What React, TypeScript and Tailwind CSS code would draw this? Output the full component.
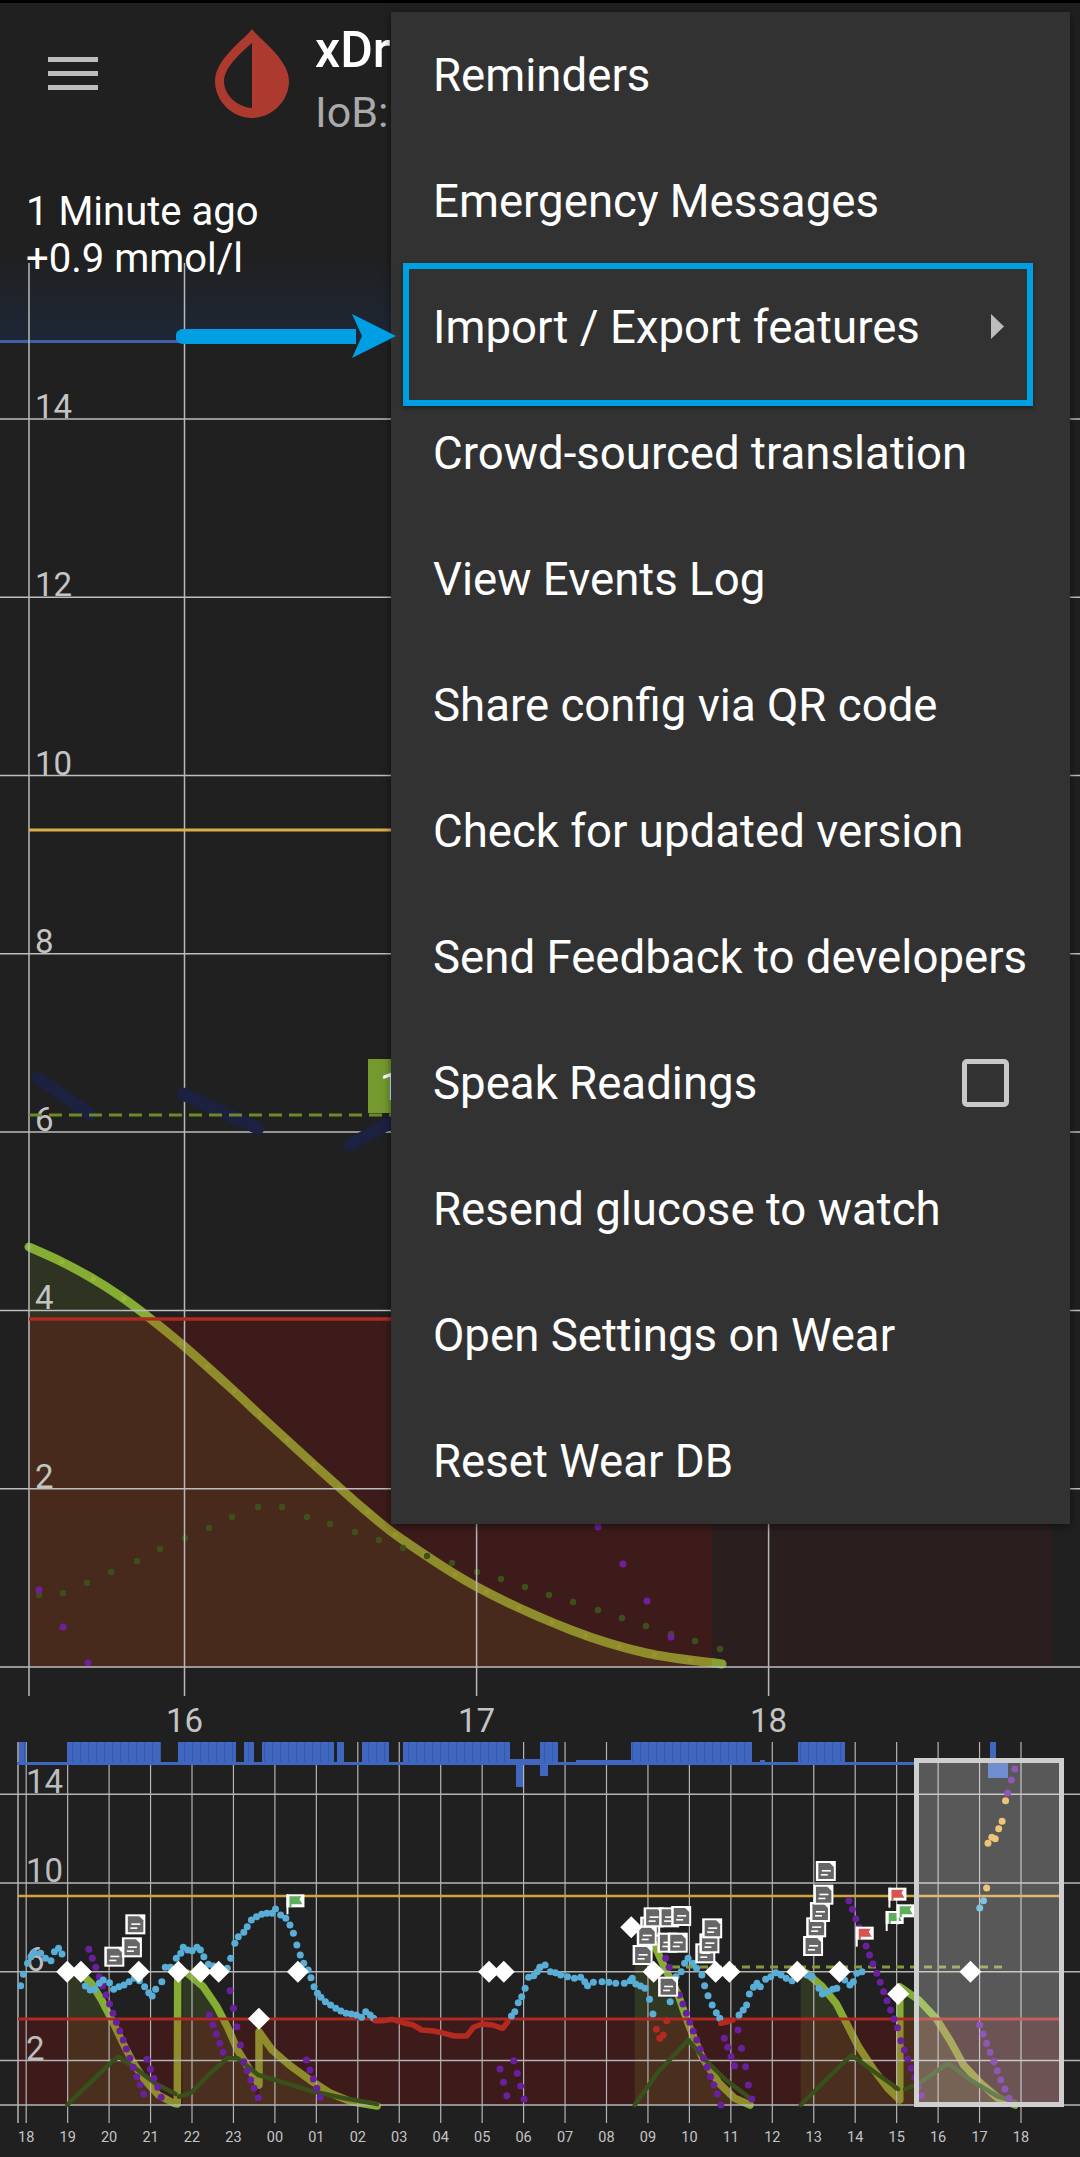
type Pt = [number, number]

const MENU_ITEMS = [
  'Reminders',
  'Emergency Messages',
  'Import / Export features',
  'Crowd-sourced translation',
  'View Events Log',
  'Share config via QR code',
  'Check for updated version',
  'Send Feedback to developers',
  'Speak Readings',
  'Resend glucose to watch',
  'Open Settings on Wear',
  'Reset Wear DB',
]

// preview data was measured on two crops, so convert to page coordinates here
const L = (pts: Pt[]): Pt[] => pts.map(([x, y]) => [x / 2.904, 1730 + y / 3])
const R = (pts: Pt[]): Pt[] => pts.map(([x, y]) => [540 + x / 2.904, 1730 + y / 3])
const line = (pts: Pt[]) => pts.map(([x, y]) => `${x.toFixed(1)},${y.toFixed(1)}`).join(' ')

const smooth = (pts: Pt[]) => {
  let d = `M${pts[0][0]} ${pts[0][1]}`
  for (let i = 0; i < pts.length - 1; i++) {
    const p0 = pts[i - 1] ?? pts[i]
    const p1 = pts[i]
    const p2 = pts[i + 1]
    const p3 = pts[i + 2] ?? p2
    const c1x = p1[0] + (p2[0] - p0[0]) / 6
    const c1y = p1[1] + (p2[1] - p0[1]) / 6
    const c2x = p2[0] - (p3[0] - p1[0]) / 6
    const c2y = p2[1] - (p3[1] - p1[1]) / 6
    d += ` C${c1x.toFixed(1)} ${c1y.toFixed(1)} ${c2x.toFixed(1)} ${c2y.toFixed(1)} ${p2[0].toFixed(1)} ${p2[1].toFixed(1)}`
  }
  return d
}

const MAIN_CURVE: Pt[] = [
  [29, 1247], [60, 1261], [90, 1277], [120, 1296], [147, 1316], [185, 1347], [233, 1390], [264, 1419], [300, 1452],
  [330, 1479], [365, 1510], [403, 1540], [477, 1587], [571, 1630], [646, 1653], [722, 1664],
]
const MAIN_CARB_DOTS: Pt[] = [
  [39, 1595], [63, 1593], [87, 1583], [111, 1572], [137, 1561], [160, 1549], [185, 1538], [209, 1528],
  [232, 1517], [258, 1507], [282, 1507], [307, 1517], [330, 1524], [355, 1532], [379, 1540], [403, 1548],
  [427, 1556], [452, 1563], [477, 1572], [501, 1579], [525, 1587], [549, 1595], [573, 1602], [598, 1610],
  [622, 1618], [646, 1626], [671, 1634], [695, 1641], [720, 1649],
]
const MAIN_PURPLE: Pt[] = [[39, 1590], [63, 1627], [88, 1663], [598, 1527], [623, 1564], [647, 1601], [671, 1637]]

const BLUE_DOTS: Pt[] = [
  ...L([
    [60, 767], [68, 733], [80, 700], [90, 680], [100, 668], [118, 670], [132, 685], [148, 692], [158, 665], [170, 655], [180, 672],
    [248, 768], [262, 780], [275, 778], [288, 760], [300, 750], [318, 758], [330, 778], [345, 770], [360, 765], [375, 755], [390, 745],
    [405, 752], [420, 770], [432, 788], [442, 798], [452, 778], [470, 755], [480, 712], [495, 712], [512, 685], [525, 670], [532, 652],
    [545, 660], [558, 662], [572, 652], [582, 660], [592, 680], [605, 703], [620, 708], [660, 715], [670, 685], [682, 640], [692, 620],
    [708, 607], [718, 590], [730, 570], [745, 560], [760, 553], [775, 550], [790, 550], [800, 537], [815, 555], [830, 565], [842, 585],
    [852, 610], [862, 645], [872, 675], [882, 700], [895, 720], [903, 743], [912, 770], [922, 790], [932, 802], [945, 815], [960, 825],
    [975, 835], [990, 843], [1005, 850], [1020, 852], [1035, 855], [1050, 862], [1062, 845], [1075, 855], [1085, 865],
    [1485, 858], [1495, 845], [1505, 818], [1515, 800], [1525, 775], [1535, 742], [1550, 737], [1560, 725], [1568, 712],
  ]),
  ...R([
    [0, 712], [15, 705], [30, 725], [45, 728], [60, 735], [80, 740], [100, 745], [118, 742], [130, 755], [138, 767], [155, 757], [180, 755],
    [200, 757], [220, 760], [245, 760], [262, 752], [268, 745], [278, 762], [292, 768], [305, 775], [318, 808], [328, 852], [378, 815],
    [395, 740], [410, 725], [420, 700], [430, 685], [445, 700], [455, 715], [470, 735], [478, 767], [488, 797], [500, 825], [512, 848],
    [522, 865], [578, 855], [590, 840], [600, 825], [608, 792], [620, 772], [630, 760], [640, 770], [655, 748], [670, 740], [685, 728],
    [700, 735], [715, 745], [732, 752], [775, 735], [790, 740], [810, 775], [820, 792], [835, 785], [850, 778], [862, 775], [885, 750],
    [900, 765], [910, 755], [920, 730], [935, 725], [1277, 534], [1288, 512],
  ]),
]
const YELLOW_DOTS = R([[1297, 474], [1301, 340], [1312, 322], [1322, 326], [1332, 296], [1342, 274], [1352, 212]])
const PURPLE_DOTS: Pt[] = [
  ...L([
    [258, 658], [268, 685], [278, 712], [288, 740], [298, 768], [308, 795], [318, 822], [328, 850], [338, 877], [348, 903], [358, 930],
    [367, 957], [377, 985], [387, 1012], [397, 1040], [407, 1065], [417, 1092], [427, 988], [437, 1018], [447, 1045], [458, 1072], [468, 1102],
    [608, 855], [618, 885], [628, 912], [638, 940], [648, 967], [668, 782], [678, 835], [688, 890], [698, 945], [708, 995], [718, 1022],
    [728, 1050], [738, 1075], [750, 1103], [890, 990], [900, 1020], [910, 1047], [920, 1075], [930, 1102],
    [1452, 1017], [1462, 1057], [1472, 1097], [1492, 992], [1502, 1030], [1512, 1068], [1522, 1108],
  ]),
  ...R([
    [365, 685], [375, 712], [405, 795], [415, 822], [425, 850], [435, 877], [445, 903], [455, 930], [465, 957], [475, 985], [485, 1012],
    [495, 1040], [505, 1065], [515, 1092], [525, 1125], [535, 925], [545, 952], [555, 980], [565, 1007], [575, 900], [585, 955], [597, 1010],
    [605, 1065], [615, 1107], [897, 512], [907, 538], [917, 567], [927, 593], [947, 648], [957, 675], [967, 702], [978, 730], [988, 757],
    [998, 785], [1008, 812], [1018, 840], [1028, 867], [1038, 893], [1048, 932], [1058, 960], [1068, 987], [1078, 1015], [1088, 1042],
    [1098, 1070], [1108, 1097], [1277, 885], [1287, 912], [1297, 940], [1307, 967], [1318, 995], [1328, 1022], [1338, 1050], [1350, 1077],
    [1362, 1105], [1358, 189], [1369, 150], [1379, 117],
  ]),
]

const GREEN_CURVES: Pt[][] = [
  L([[240, 735], [265, 760], [295, 810], [325, 870], [355, 935], [385, 995], [420, 1050], [460, 1095], [505, 1120], [515, 1122], [516, 750]]),
  L([[545, 730], [590, 770], [630, 830], [660, 890], [690, 960], [720, 1010], [752, 1065], [752, 905], [790, 960], [840, 1005], [900, 1050], [960, 1090], [1020, 1115], [1095, 1128]]),
  R([[330, 640], [365, 720], [400, 790], [430, 880], [470, 980], [520, 1060], [565, 1105], [610, 1125]]),
  R([[775, 730], [820, 770], [860, 820], [890, 880], [925, 950], [970, 1020], [1010, 1075], [1045, 1110], [1045, 800], [1045, 770], [1100, 810], [1150, 865], [1190, 930], [1230, 1005], [1280, 1060], [1330, 1105], [1380, 1125]]),
]
const GREEN_FILLS: Pt[][] = [
  L([[197, 1125], [197, 730], [240, 735], [295, 810], [355, 935], [420, 1050], [505, 1125]]),
  L([[530, 1125], [530, 730], [590, 770], [660, 890], [720, 1010], [752, 1125]]),
  L([[752, 1125], [752, 905], [840, 1005], [960, 1090], [1095, 1125]]),
  R([[275, 1125], [275, 690], [365, 720], [430, 880], [520, 1060], [610, 1125]]),
  R([[757, 1125], [757, 730], [820, 770], [890, 880], [970, 1020], [1045, 1125]]),
  R([[1045, 1125], [1045, 770], [1150, 865], [1230, 1005], [1380, 1125]]),
]
const DARK_CURVES: Pt[][] = [
  L([[195, 1125], [260, 1060], [320, 1000], [345, 980], [400, 1020], [450, 1060], [510, 1092]]),
  L([[520, 1100], [555, 1088], [610, 1030], [660, 985], [690, 985], [750, 1035], [800, 1050], [900, 1082], [1000, 1105], [1095, 1122]]),
  R([[275, 1125], [340, 1030], [430, 930], [480, 990], [540, 1050], [610, 1105]]),
  R([[757, 1125], [830, 1050], [905, 975], [970, 1025], [1040, 1077]]),
  R([[1060, 1078], [1100, 1060], [1185, 1000], [1250, 1050], [1330, 1100], [1380, 1115]]),
]
const RED_LINES: Pt[][] = [
  L([[1090, 872], [1110, 872], [1140, 868], [1170, 878], [1200, 885], [1225, 900], [1260, 903], [1290, 910], [1320, 918], [1355, 918], [1375, 892], [1400, 882], [1430, 885], [1460, 895], [1475, 875]]),
  R([[525, 880], [545, 875], [560, 870]]),
]
const RED_DOTS = R([[338, 898], [358, 915], [348, 925], [368, 872]])
const DIAMONDS: Pt[] = [
  ...L([[195, 725], [235, 725], [403, 725], [518, 725], [583, 725], [635, 725], [865, 725], [752, 866], [1420, 725], [1463, 725]]),
  ...R([[265, 592], [330, 725], [510, 725], [550, 725], [747, 725], [870, 725], [1040, 792], [1250, 725]]),
]
const NOTES: Pt[] = [
  ...L([[332, 680], [383, 652], [393, 583]]),
  ...R([
    [320, 590], [310, 617], [298, 675], [330, 562], [375, 562], [410, 558], [370, 638], [400, 638], [372, 770],
    [480, 670], [492, 640], [500, 595], [793, 648], [802, 592], [813, 546], [823, 494], [830, 423],
  ]),
]
const FLAGS: { p: Pt; color: string }[] = [
  { p: L([[858, 520]])[0], color: '#5fae5c' },
  { p: R([[943, 617]])[0], color: '#d9534f' },
  { p: R([[1038, 500]])[0], color: '#d9534f' },
  { p: R([[1030, 570]])[0], color: '#5fae5c' },
  { p: R([[1062, 550]])[0], color: '#5fae5c' },
]
const BASAL_BARS: [number, number][] = [
  [19, 26], [67, 161], [178, 236], [244, 254], [262, 334], [337, 344], [362, 389], [403, 510], [540, 558], [631, 752], [798, 845],
]
const HOURS = ['18', '19', '20', '21', '22', '23', '00', '01', '02', '03', '04', '05', '06', '07', '08', '09', '10', '11', '12', '13', '14', '15', '16', '17', '18']

const Dots = ({ pts, color, r = 3.2 }: { pts: Pt[]; color: string; r?: number }) => (
  <>
    {pts.map(([x, y], i) => (
      <circle key={i} cx={x} cy={y} r={r} fill={color} />
    ))}
  </>
)

const MainChart = () => (
  <svg className="block w-[1080px] h-[1610px]" viewBox="0 130 1080 1610">
    <defs>
      <linearGradient id="basalGlow" x1="0" y1="0" x2="0" y2="1">
        <stop offset="0" stopColor="#1e2737" stopOpacity="0" />
        <stop offset="1" stopColor="#1e2737" />
      </linearGradient>
    </defs>
    <rect x="0" y="255" width="391" height="87" fill="url(#basalGlow)" />
    <rect x="0" y="340" width="180" height="3" fill="#3f5da8" />

    <path d={`${smooth(MAIN_CURVE)} L722 1667 L29 1667 Z`} fill="#85ad34" fillOpacity="0.14" />
    <path d={smooth(MAIN_CURVE)} fill="none" stroke="#85ad34" strokeWidth="9" strokeLinecap="round" />
    <path d={smooth(MAIN_CURVE)} fill="none" stroke="#a5c040" strokeOpacity="0.55" strokeWidth="5" strokeLinecap="round" strokeDasharray="0 36" />

    <rect x="29" y="1321" width="683" height="346" fill="#b20808" fillOpacity="0.2" />
    <rect x="712" y="1321" width="340" height="346" fill="#b20808" fillOpacity="0.08" />
    <Dots pts={MAIN_CARB_DOTS} color="#3f4f1c" />
    <Dots pts={MAIN_PURPLE} color="#6f1f9e" r={3.5} />

    {[14, 12, 10, 8, 6, 4, 2, 0].map((v) => {
      const y = 1667 - 89.15 * v
      return (
        <g key={v}>
          <line x1="0" x2="1080" y1={y} y2={y} stroke="#bdbdbd" strokeWidth="1.5" />
          {v > 0 && (
            <text x="35" y={y - 1} fontSize="33" fill="#c4c4c4">
              {v}
            </text>
          )}
        </g>
      )
    })}
    {[29, 184.5, 476.6, 768.6].map((x) => (
      <line key={x} x1={x} x2={x} y1="263" y2="1696" stroke="#b8b8b8" strokeWidth="1.5" />
    ))}
    {[
      ['16', 184.5],
      ['17', 476.6],
      ['18', 768.6],
    ].map(([label, x]) => (
      <text key={label} x={x} y="1732" fontSize="33" fill="#c4c4c4" textAnchor="middle">
        {label}
      </text>
    ))}

    <line x1="29" x2="391" y1="830" y2="830" stroke="#d8b04a" strokeWidth="3" />
    <g stroke="#1c2140" strokeWidth="13" strokeLinecap="round">
      <line x1="38" y1="1078" x2="90" y2="1114" />
      <line x1="183" y1="1094" x2="258" y2="1128" />
      <line x1="350" y1="1145" x2="391" y2="1122" />
    </g>
    <rect x="368" y="1059" width="23" height="54" fill="#74992e" />
    <text x="380" y="1100" fontSize="38" fill="#fff">
      1
    </text>
    <line x1="29" x2="391" y1="1115" y2="1115" stroke="#6c8a2a" strokeWidth="3" strokeDasharray="13 7" />
    <line x1="29" x2="1052" y1="1319" y2="1319" stroke="#b0281f" strokeWidth="3.5" />
  </svg>
)

const NoteIcon = ({ p }: { p: Pt }) => (
  <g transform={`translate(${p[0] - 10} ${p[1] - 10})`}>
    <rect width="20" height="20" fill="#fff" />
    <path d="M2.5 2 H14 L18 6 V18 H2.5 Z" fill="#666" />
    <rect x="6" y="9" width="9" height="1.6" fill="#fff" />
    <rect x="5" y="13" width="7" height="1.6" fill="#fff" />
  </g>
)

const FlagIcon = ({ p, color }: { p: Pt; color: string }) => (
  <g transform={`translate(${p[0] - 9} ${p[1] - 9})`}>
    <rect x="0" y="0" width="18" height="13" fill="#fff" />
    <rect x="0" y="0" width="2" height="20" fill="#fff" />
    <path d="M3 2 H15 L13 5 L16 10 H5 V13 H3 Z" fill={color} />
  </g>
)

const PreviewChart = () => {
  const ys = [14, 10, 6, 2, 0]
  return (
    <svg className="block w-[1080px] h-[417px]" viewBox="0 1740 1080 417">
      <defs>
        <pattern id="basalStripes" x="0" y="0" width="8" height="30" patternUnits="userSpaceOnUse">
          <rect width="8" height="30" fill="#3f67c0" />
          <rect width="1" height="30" fill="#3558ab" />
        </pattern>
      </defs>

      {GREEN_FILLS.map((pts, i) => (
        <polygon key={i} points={line(pts)} fill="#85ad34" fillOpacity="0.17" />
      ))}
      {GREEN_CURVES.map((pts, i) => (
        <polyline key={i} points={line(pts)} fill="none" stroke="#85ad34" strokeWidth="7.5" strokeLinejoin="round" strokeLinecap="round" />
      ))}
      <rect x="18" y="2021" width="1041" height="84" fill="#b20808" fillOpacity="0.2" />

      {ys.map((v) => {
        const y = 2105 - 22.2 * v
        return <line key={v} x1="0" x2="1080" y1={y} y2={y} stroke="#b4b4b4" strokeWidth="1.5" />
      })}
      <line x1="18" x2="18" y1="1742" y2="2123" stroke="#b4b4b4" strokeWidth="1.5" />
      {HOURS.map((h, i) => (
        <g key={i}>
          <line x1={26.2 + 41.45 * i} x2={26.2 + 41.45 * i} y1="1742" y2="2123" stroke="#b4b4b4" strokeWidth="1.2" />
          <text x={26.2 + 41.45 * i} y="2142" fontSize="14.5" fill="#c4c4c4" textAnchor="middle">
            {h}
          </text>
        </g>
      ))}
      {ys.slice(0, 4).map((v) => (
        <text key={v} x="26" y={2104 - 22.2 * v} fontSize="33" fill="#bdbdbd">
          {v}
        </text>
      ))}

      {BASAL_BARS.map(([a, b]) => (
        <rect key={a} x={a} y="1742" width={b - a} height="23" fill="url(#basalStripes)" />
      ))}
      <rect x="17" y="1762" width="900" height="3" fill="#3f67c0" />
      <rect x="510" y="1759" width="30" height="6" fill="#3f67c0" />
      <rect x="516" y="1765" width="7" height="22" fill="#3f67c0" />
      <rect x="540" y="1765" width="8" height="11" fill="#3f67c0" />
      <rect x="576" y="1760" width="55" height="3" fill="#3f67c0" />
      <rect x="990" y="1742" width="6" height="20" fill="#3f67c0" />
      <rect x="988" y="1763" width="20" height="15" fill="#3f67c0" />
      <rect x="760" y="1760" width="5" height="5" fill="#3f67c0" />

      <line x1="18" x2="1059" y1="1896" y2="1896" stroke="#d4a23a" strokeWidth="2.5" />
      <line x1="18" x2="1059" y1="2019" y2="2019" stroke="#b0281f" strokeWidth="3" />
      <line x1="672" x2="1006" y1="1967" y2="1967" stroke="#7e9a3c" strokeWidth="3" strokeDasharray="8 6" />

      {DARK_CURVES.map((pts, i) => (
        <polyline key={i} points={line(pts)} fill="none" stroke="#38501a" strokeWidth="4.5" strokeLinejoin="round" strokeLinecap="round" />
      ))}
      <Dots pts={PURPLE_DOTS} color="#6a1f9e" r={3.5} />
      <Dots pts={BLUE_DOTS} color="#58aed6" r={3.5} />
      <Dots pts={YELLOW_DOTS} color="#e8b24a" r={3.5} />
      <Dots pts={RED_DOTS} color="#b52a20" r={3.5} />
      {RED_LINES.map((pts, i) => (
        <polyline key={i} points={line(pts)} fill="none" stroke="#b52a20" strokeWidth="5.5" strokeLinejoin="round" strokeLinecap="round" />
      ))}

      {NOTES.map((p, i) => (
        <NoteIcon key={i} p={p} />
      ))}
      {FLAGS.map((f, i) => (
        <FlagIcon key={i} p={f.p} color={f.color} />
      ))}
      {DIAMONDS.map(([x, y], i) => (
        <polygon key={i} points={`${x - 11},${y} ${x},${y - 11} ${x + 11},${y} ${x},${y + 11}`} fill="#fff" />
      ))}

      {/* viewport window of the preview */}
      <rect x="916.5" y="1760.5" width="145" height="344" fill="#fff" fillOpacity="0.25" stroke="#cfcfcf" strokeWidth="5" />
    </svg>
  )
}

const OverflowMenu = () => (
  <div className="absolute left-[391px] top-[12px] w-[679px] bg-[#323232] shadow-[0_2px_8px_rgba(0,0,0,0.5)]">
    {MENU_ITEMS.map((item) => (
      <div key={item} className="flex h-[126px] items-center justify-between pl-[42px] pr-[61px] pt-[2px] text-[45.6px] text-white">
        <span className="whitespace-nowrap">{item}</span>
        {item === 'Import / Export features' && (
          <svg className="mr-[5px] h-[25px] w-[13px] -translate-y-[2px]" viewBox="0 0 13 25">
            <path d="M0 0 L13 12.5 L0 25 Z" fill="#bdbdbd" />
          </svg>
        )}
        {item === 'Speak Readings' && <div className="h-[48px] w-[47px] -translate-y-[1px] rounded-[5px] border-[5px] border-[#c8c8c8]" />}
      </div>
    ))}
    <div className="absolute left-[12px] top-[251px] h-[143px] w-[630px] border-[6px] border-[#009fe3] shadow-[0_2px_4px_rgba(0,0,0,0.4)]" />
  </div>
)

export default function App() {
  return (
    <div className="relative h-[2157px] w-[1080px] overflow-hidden bg-[#202020] font-['Roboto',sans-serif]">
      <div className="h-[3px] bg-black" />
      <header className="flex h-[127px] items-start">
        <div className="ml-[48px] mt-[54px] flex w-[50px] flex-col gap-[9px]">
          <div className="h-[5px] bg-[#bdbdbd]" />
          <div className="h-[5px] bg-[#bdbdbd]" />
          <div className="h-[5px] bg-[#bdbdbd]" />
        </div>
        <svg className="ml-[117px] mt-[26px] h-[89px] w-[74px]" viewBox="0 0 74 89">
          <path d="M37 0 C44 10 74 30 74 52 C74 72 57 89 37 89 C17 89 0 72 0 52 C0 30 30 10 37 0 Z" fill="#ad3a2e" />
          <path d="M37 14 C28 22 9 38 9 52 C9 66 22 78 37 79 Z" fill="#202020" />
        </svg>
        <div className="ml-[26px] mt-[20px] flex flex-col">
          <span className="text-[50px] font-medium leading-[54px] text-white">xDrip+</span>
          <span className="mt-[13px] text-[43px] leading-[44px] text-[#aaaaaa]">IoB:</span>
        </div>
      </header>

      <div className="relative">
        <div className="absolute left-[26px] top-[58px] text-[40px] leading-[47px] text-white">
          <div>1 Minute ago</div>
          <div>+0.9 mmol/l</div>
        </div>
        <MainChart />
      </div>
      <PreviewChart />

      <OverflowMenu />
      <svg className="absolute left-[176px] top-[314px] h-[44px] w-[220px]" viewBox="0 0 220 44">
        <path d="M7 15 H180 V30 H7 A7.5 7.5 0 0 1 7 15 Z" fill="#009fe3" />
        <path d="M176 0 L220 22 L176 44 L186 22 Z" fill="#009fe3" />
      </svg>
    </div>
  )
}
